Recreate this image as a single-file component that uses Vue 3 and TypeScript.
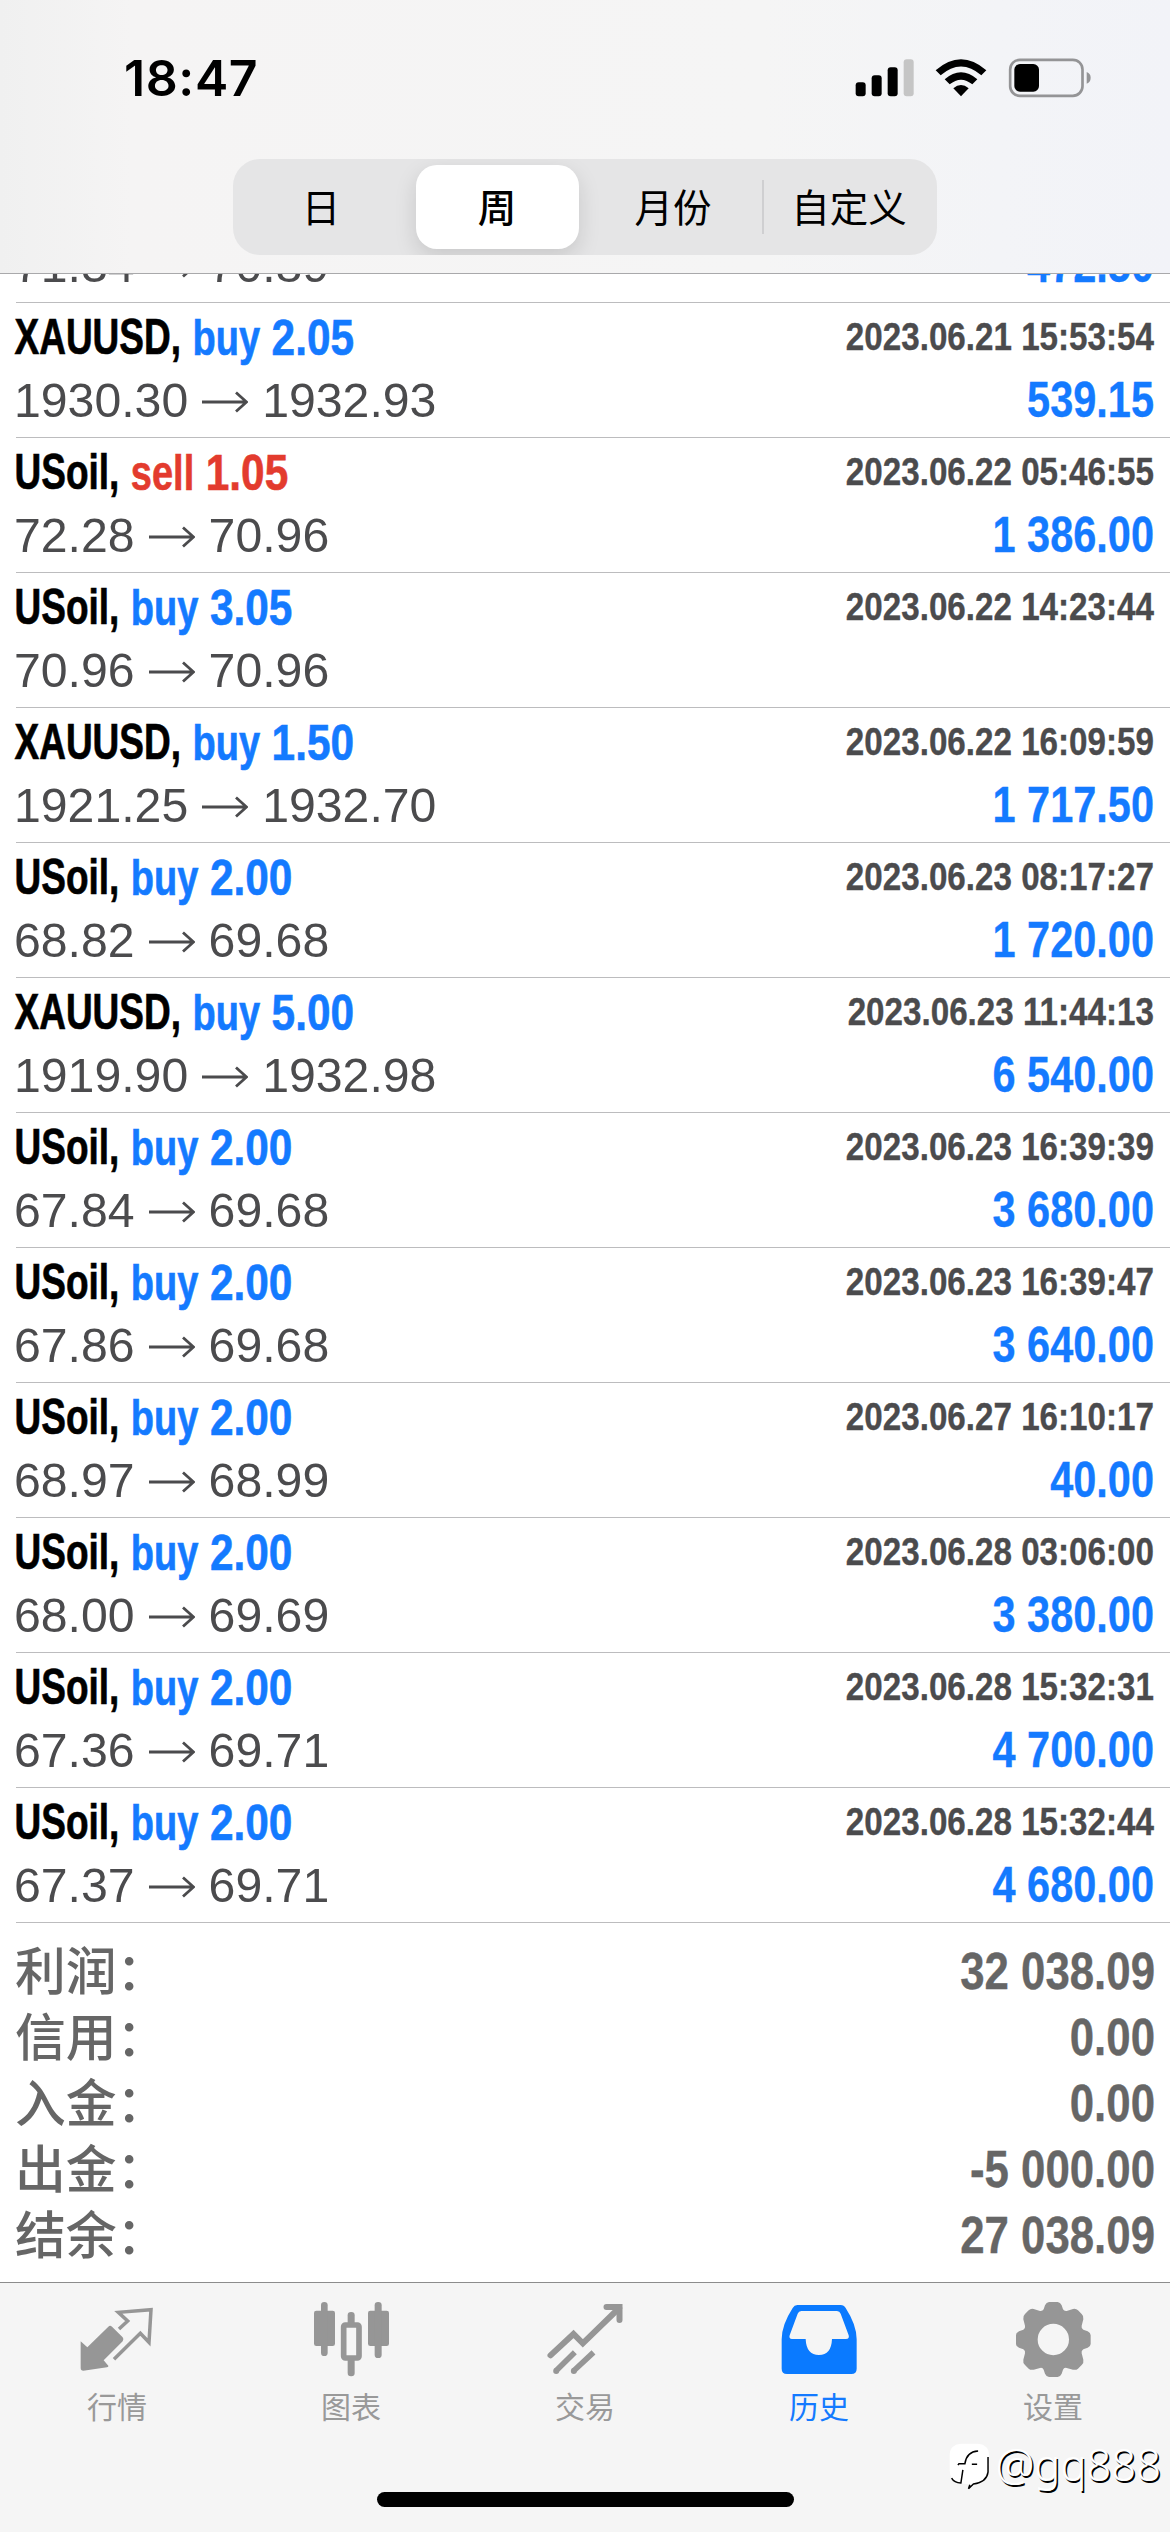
<script setup lang="ts">
interface Deal {
  symbol?: string
  side?: 'buy' | 'sell'
  volume?: string
  time?: string
  open: string
  close: string
  profit: string
}

const periods: string[] = ['日', '周', '月份', '自定义']
const activePeriod = 1

// The first entry is scrolled under the header, so only its price line is kept.
const deals: Deal[] = [
  { open: '71.34', close: '70.89', profit: '472.50' },
  { symbol: 'XAUUSD', side: 'buy', volume: '2.05', time: '2023.06.21 15:53:54', open: '1930.30', close: '1932.93', profit: '539.15' },
  { symbol: 'USoil', side: 'sell', volume: '1.05', time: '2023.06.22 05:46:55', open: '72.28', close: '70.96', profit: '1 386.00' },
  { symbol: 'USoil', side: 'buy', volume: '3.05', time: '2023.06.22 14:23:44', open: '70.96', close: '70.96', profit: '' },
  { symbol: 'XAUUSD', side: 'buy', volume: '1.50', time: '2023.06.22 16:09:59', open: '1921.25', close: '1932.70', profit: '1 717.50' },
  { symbol: 'USoil', side: 'buy', volume: '2.00', time: '2023.06.23 08:17:27', open: '68.82', close: '69.68', profit: '1 720.00' },
  { symbol: 'XAUUSD', side: 'buy', volume: '5.00', time: '2023.06.23 11:44:13', open: '1919.90', close: '1932.98', profit: '6 540.00' },
  { symbol: 'USoil', side: 'buy', volume: '2.00', time: '2023.06.23 16:39:39', open: '67.84', close: '69.68', profit: '3 680.00' },
  { symbol: 'USoil', side: 'buy', volume: '2.00', time: '2023.06.23 16:39:47', open: '67.86', close: '69.68', profit: '3 640.00' },
  { symbol: 'USoil', side: 'buy', volume: '2.00', time: '2023.06.27 16:10:17', open: '68.97', close: '68.99', profit: '40.00' },
  { symbol: 'USoil', side: 'buy', volume: '2.00', time: '2023.06.28 03:06:00', open: '68.00', close: '69.69', profit: '3 380.00' },
  { symbol: 'USoil', side: 'buy', volume: '2.00', time: '2023.06.28 15:32:31', open: '67.36', close: '69.71', profit: '4 700.00' },
  { symbol: 'USoil', side: 'buy', volume: '2.00', time: '2023.06.28 15:32:44', open: '67.37', close: '69.71', profit: '4 680.00' },
]

const totals: { label: string; value: string }[] = [
  { label: '利润：', value: '32 038.09' },
  { label: '信用：', value: '0.00' },
  { label: '入金：', value: '0.00' },
  { label: '出金：', value: '-5 000.00' },
  { label: '结余：', value: '27 038.09' },
]
</script>

<template>
  <div class="screen">
    <header class="header">
      <div class="status">
        <span class="clock">18:47</span>
        <svg class="status-icons" viewBox="100 50 720 126" width="240" height="42">
          <rect x="108" y="126" width="30" height="42" rx="9" />
          <rect x="156" y="105" width="30" height="63" rx="9" />
          <rect x="204" y="81" width="30" height="87" rx="9" />
          <rect x="252" y="57" width="30" height="111" rx="9" fill="#c5c5c5" />
          <path d="M348 90 Q424 24 500 90 L485 105 Q424 52 363 105 Z" />
          <path d="M375 117 Q424 75 473 117 L458 132 Q424 104 390 132 Z" />
          <path d="M401 144 Q424 124 447 144 L424 168 Z" />
          <rect x="571.5" y="58.500" width="217" height="108" rx="29" fill="none" stroke="#949496" stroke-width="8" />
          <rect x="584" y="71" width="74" height="83" rx="17" />
          <path d="M801 95 Q813 100 813 112 Q813 125 801 130 Z" fill="#949496" />
        </svg>
      </div>
      <div class="segments">
        <div
          v-for="(p, i) in periods"
          :key="p"
          class="segment"
          :class="{ active: i === activePeriod, divided: i === 3 }"
        >
          <span>{{ p }}</span>
        </div>
      </div>
    </header>

    <main class="history">
      <div class="deals">
        <article v-for="(d, i) in deals" :key="i" class="deal">
          <div v-if="d.symbol" class="line head">
            <div class="title">
              <span class="symbol">{{ d.symbol }},</span>
              <span class="side" :class="d.side">{{ d.side }}</span>
              <span class="volume" :class="d.side">{{ d.volume }}</span>
            </div>
            <span class="time">{{ d.time }}</span>
          </div>
          <div class="line body">
            <div class="prices">
              <span>{{ d.open }}</span>
              <svg class="arrow" viewBox="0 0 46 22" width="46" height="22">
                <path d="M0 11H44M34 1.500L44.500 11L34 20.500" />
              </svg>
              <span>{{ d.close }}</span>
            </div>
            <span class="profit">{{ d.profit }}</span>
          </div>
        </article>
      </div>
      <div class="totals">
        <div v-for="t in totals" :key="t.label" class="total">
          <span class="label">{{ t.label }}</span>
          <span class="value">{{ t.value }}</span>
        </div>
      </div>
    </main>

    <footer class="footer">
      <nav class="tabs">
        <div class="tab">
          <svg viewBox="88 66 225 225">
            <path d="M90 184 L110 202 L173 140 Q178 135 184 140 L216 172 Q221 178 216 184 L159 241 L173 257 Q174 261 169 262 L98 272 Q90 272 90 264 Z" />
            <path d="M205 147 L231 123 L203 97 L301 89 L295 187 L269 160 L190 238" fill="none" stroke="#969696" stroke-width="10.500" />
          </svg>
          <span>行情</span>
        </div>
        <div class="tab">
          <svg viewBox="790 66 225 225">
            <rect x="790" y="92" width="63" height="106" rx="7" />
            <rect x="811" y="66" width="20" height="162" rx="10" />
            <rect x="952" y="92" width="63" height="106" rx="7" />
            <rect x="972" y="66" width="21" height="168" rx="10" />
            <rect x="891" y="96" width="21" height="50" rx="10" />
            <rect x="891" y="225" width="21" height="64" rx="10" />
            <rect x="879" y="135" width="46" height="99" rx="5" fill="#f5f5f5" stroke="#969696" stroke-width="17" />
          </svg>
          <span>图表</span>
        </div>
        <div class="tab">
          <svg viewBox="82.500 66 225 225">
            <path d="M90 226 L159 162 L187 190 L296 84" fill="none" stroke="#969696" stroke-width="18" stroke-linecap="round" />
            <path d="M258 81 H297 V120" fill="none" stroke="#969696" stroke-width="18" stroke-linecap="round" />
            <path d="M106 273 L163 217 M159 273 L219 217" fill="none" stroke="#969696" stroke-width="17" />
            <circle cx="107" cy="273" r="9" />
            <circle cx="160" cy="273" r="9" />
          </svg>
          <span>交易</span>
        </div>
        <div class="tab current">
          <svg viewBox="784 66 225 225">
            <path fill-rule="evenodd" d="M830 75 H960 Q970 75 975 84 Q1008 135 1008 178 V266 Q1008 282 992 282 H799 Q783 282 783 266 V178 Q783 135 816 84 Q821 75 830 75 Z M842 93 Q834 93 831 101 L807 166 Q804 177 814 177 H855 Q857 225 895 225 Q932 225 934 177 H976 Q987 177 984 166 L960 101 Q957 93 949 93 Z" />
          </svg>
          <span>历史</span>
        </div>
        <div class="tab">
          <svg viewBox="346 96 225 225">
            <path fill-rule="evenodd" d="M445 96 H471 Q479 97 483 106 L487 118 Q490 124 498 123 L517 117 Q526 115 532 121 L543 132 Q550 138 548 148 L543 167 Q541 175 548 179 L561 184 Q570 188 570 196 V222 Q570 229 561 233 L548 238 Q541 242 543 250 L548 269 Q550 278 543 285 L532 296 Q526 301 517 299 L498 294 Q490 292 487 299 L483 311 Q479 320 471 321 H445 Q437 320 433 311 L429 299 Q426 292 418 294 L399 299 Q390 301 384 296 L373 285 Q366 278 368 269 L373 250 Q375 242 368 238 L355 233 Q346 229 346 222 V196 Q346 188 355 184 L368 179 Q375 175 373 167 L368 148 Q366 138 373 132 L384 121 Q390 115 399 117 L418 123 Q426 124 429 118 L433 106 Q437 97 445 96 Z M505 208.500 A47 47 0 1 0 411 208.500 A47 47 0 1 0 505 208.500 Z" />
          </svg>
          <span>设置</span>
        </div>
      </nav>
      <div class="home-bar"></div>
      <div class="watermark">
        <svg viewBox="145 530 122 142" width="41" height="47">
          <path d="M180 532 H232 Q265 535 265 568 V612 Q265 648 226 654 L202 671 L206 655 L180 652 Q146 645 146 612 V568 Q146 535 180 532 Z" fill="#fff" />
          <path d="M152 636 Q160 650 180 651 L186 611 M171 597 L174 593 H192 Q197 556 232 554 M213 594 H229 M262 572 V618 Q258 648 218 654 L203 668 L207 656" fill="none" stroke="#000" stroke-width="4.500" />
        </svg>
        <span>@gq888</span>
      </div>
    </footer>
  </div>
</template>

<style>
body {
  margin: 0;
  background: #fff;
}
</style>

<style scoped>
.screen {
  width: 1170px;
  height: 2532px;
  display: flex;
  flex-direction: column;
  overflow: hidden;
  background: #fff;
  font-family: "Liberation Sans", "Noto Sans CJK SC", sans-serif;
}

.header {
  box-sizing: border-box;
  height: 274px;
  flex: none;
  border-bottom: 1px solid #a9a9ab;
  background: linear-gradient(90deg, #f0f0f0 0, #f5f4f4 130px, #f5f5f5 760px, #f3f4f7 1000px, #f2f3f8 1170px);
  display: flex;
  flex-direction: column;
  align-items: center;
}

.status {
  box-sizing: border-box;
  width: 100%;
  height: 159px;
  flex: none;
  padding: 47px 77px 0 124px;
  display: flex;
  justify-content: space-between;
  align-items: flex-start;
}

.clock {
  font: 600 50px/62px Inter, sans-serif;
  letter-spacing: 0.6px;
  color: #000;
}

.status-icons {
  margin-top: 9.500px;
}

.segments {
  box-sizing: border-box;
  width: 704px;
  height: 96px;
  border-radius: 27px;
  background: #e5e5e6;
  display: flex;
  overflow: hidden;
}

.segment {
  flex: 0 0 176px;
  display: flex;
  align-items: center;
  justify-content: center;
  font: 400 38.500px/56px "Noto Sans CJK SC", sans-serif;
  color: #000;
}

.segment span {
  padding-bottom: 5px;
}

.segment.active {
  flex-basis: 163px;
  margin: 6px 6.500px;
  border-radius: 21px;
  background: #fff;
  font-weight: 500;
  box-shadow: 0 8px 22px rgba(0, 0, 0, 0.13);
}

.segment.divided {
  background: linear-gradient(#cfcfd1, #cfcfd1) 1px center / 2px 54px no-repeat;
}

.history {
  height: 2008px;
  flex: none;
  display: flex;
  flex-direction: column;
  justify-content: flex-start;
}

.deals {
  height: 1649px;
  flex: none;
  display: flex;
  flex-direction: column;
  justify-content: flex-end;
  overflow: hidden;
}

.deal {
  box-sizing: border-box;
  height: 135px;
  flex: none;
  display: flex;
  flex-direction: column;
  justify-content: flex-end;
  margin-left: 16px;
  padding: 3px 16px 5px 0;
  border-bottom: 1px solid #bcbcbe;
}

.line {
  display: flex;
  justify-content: space-between;
}

.head {
  height: 62px;
  line-height: 62px;
  font-weight: 700;
}

.body {
  height: 64px;
  line-height: 64px;
}

.title {
  display: flex;
  margin-left: -1.500px;
  padding-top: 1px;
  -webkit-text-stroke-width: 0.5px;
}

.title span,
.time,
.profit,
.value {
  display: block;
  font-weight: 700;
  white-space: pre;
}

.symbol {
  font-size: 37px;
  transform: scaleY(1.346);
  color: #000;
}

.title .side {
  margin-left: 11.500px;
  font-size: 38px;
  transform: scaleY(1.311);
}

.title .volume {
  margin-left: 11.500px;
  font-size: 42.400px;
  transform: scaleY(1.175);
}

.buy {
  color: #147aff;
}

.sell {
  color: #e33b2e;
}

.time {
  line-height: 61px;
  font-size: 33.200px;
  transform: scaleY(1.196);
  color: #4b4b4d;
}

.prices {
  display: flex;
  align-items: center;
  margin-left: -2px;
  font-size: 48.200px;
  color: #4b4b4d;
}

.arrow {
  margin: 4px 14px 0 14px;
  fill: none;
  stroke: #4b4b4d;
  stroke-width: 2.800;
}

.profit {
  font-size: 41.500px;
  transform: scaleY(1.193);
  color: #147aff;
}

.profit,
.time,
.value {
  -webkit-text-stroke-width: 0.3px;
}

.totals {
  padding: 15px 15px 0 15px;
}

.total {
  height: 66px;
  display: flex;
  justify-content: space-between;
  align-items: flex-start;
  color: #666;
}

.label {
  font: 500 50.800px/60px "Noto Sans CJK SC", sans-serif;
}

.value {
  line-height: 66px;
  font-size: 43.800px;
  transform: scaleY(1.196);
}

.footer {
  position: relative;
  box-sizing: border-box;
  height: 250px;
  flex: none;
  border-top: 1px solid #8c8c8c;
  background: #f5f5f5;
  display: flex;
  flex-direction: column;
  align-items: center;
}

.tabs {
  width: 100%;
  height: 209px;
  flex: none;
  display: flex;
}

.tab {
  flex: 1;
  padding-top: 19px;
  display: flex;
  flex-direction: column;
  align-items: center;
  font: 400 30px/40px "Noto Sans CJK SC", sans-serif;
  color: #999;
}

.tab svg {
  width: 75px;
  height: 75px;
  flex: none;
  fill: #969696;
  overflow: visible;
}

.tab span {
  margin-top: 8px;
}

.tab.current {
  color: #147aff;
}

.tab.current svg {
  fill: #0a7aff;
}

.home-bar {
  width: 417px;
  height: 15px;
  border-radius: 8px;
  background: #000;
}

.watermark {
  position: absolute;
  right: 9px;
  bottom: 33px;
  display: flex;
  align-items: center;
  gap: 6px;
  font: 300 43.500px/60px "Noto Sans", sans-serif;
  color: #fff;
  text-shadow: 1.500px 1.500px 0 #000;
}

.watermark span {
  padding-bottom: 5px;
}
</style>
